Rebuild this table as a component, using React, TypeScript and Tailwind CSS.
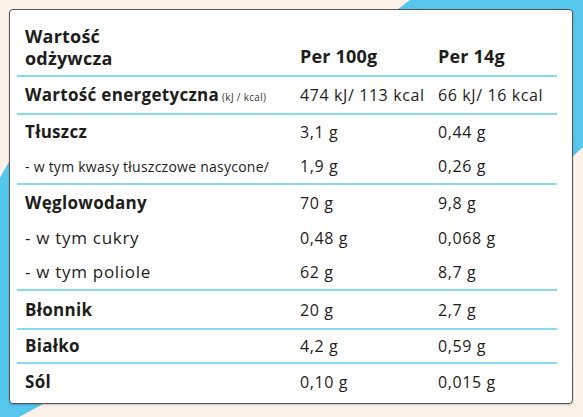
const font = { fontFamily: "'Open Sans', 'Noto Sans', sans-serif" };

type Row = { label: string; sub?: string; bold?: boolean; small?: boolean; a: string; b: string; h: string };

const groups: Row[][] = [
  [{ label: "Wartość energetyczna", sub: "(kJ / kcal)", bold: true, a: "474 kJ/ 113 kcal", b: "66 kJ/ 16 kcal", h: "h-[36px]" }],
  [
    { label: "Tłuszcz", bold: true, a: "3,1 g", b: "0,44 g", h: "h-[34px]" },
    { label: "- w tym kwasy tłuszczowe nasycone/", small: true, a: "1,9 g", b: "0,26 g", h: "h-[34px]" },
  ],
  [
    { label: "Węglowodany", bold: true, a: "70 g", b: "9,8 g", h: "h-[35px]" },
    { label: "- w tym cukry", a: "0,48 g", b: "0,068 g", h: "h-[35px]" },
    { label: "- w tym poliole", a: "62 g", b: "8,7 g", h: "h-[34px]" },
  ],
  [{ label: "Błonnik", bold: true, a: "20 g", b: "2,7 g", h: "h-[37px]" }],
  [{ label: "Białko", bold: true, a: "4,2 g", b: "0,59 g", h: "h-[32px]" }],
];

function labelClass(r: Row) {
  if (r.bold) return "text-[17px] font-bold tracking-[0.3px]";
  if (r.small) return "text-[14px] tracking-[0.25px]";
  return "text-[17px] tracking-[0.7px]";
}

function TableRow({ row }: { row: Row }) {
  return (
    <div className={`grid grid-cols-[283px_138px_1fr] items-center ${row.h}`}>
      <div className={`pl-[8px] whitespace-nowrap ${labelClass(row)}`}>
        {row.label}
        {row.sub && <span className="ml-[3px] text-[10px] font-normal tracking-[0.3px] text-[#333]">{row.sub}</span>}
      </div>
      <div className="text-[16px] tracking-[0.6px] whitespace-nowrap">{row.a}</div>
      <div className="text-[16px] tracking-[0.6px] whitespace-nowrap">{row.b}</div>
    </div>
  );
}

export default function App() {
  return (
    <div className="relative w-[583px] h-[417px] overflow-hidden bg-[#fdf2e8]" style={font}>
      <svg className="absolute inset-0" width="583" height="417" viewBox="0 0 583 417">
        <polygon points="410,0 583,0 583,147 568,161 330,60" fill="#55c6ee" />
        <path d="M0,178 C4,170 9,161 16,152 L120,250 L60,395 L19,417 L0,417 Z" fill="#55c6ee" />
      </svg>
      <div className="relative ml-[9px] mt-[9px] w-[564px] h-[395px] rounded-[4px] border border-[#555] bg-white text-[#1d1d1b] shadow-[0_1px_2px_rgba(0,0,0,0.2)]">
        <div className="ml-[7px] w-[540px]">
          <div className="grid grid-cols-[283px_138px_1fr] h-[67px] pt-[15px] border-b-2 border-[#86dde9] leading-[22px] text-[18px] font-bold tracking-[0.2px]">
            <div className="pl-[8px]">
              Wartość
              <br />
              odżywcza
            </div>
            <div className="self-end pb-[8px]">Per 100g</div>
            <div className="self-end pb-[8px]">Per 14g</div>
          </div>
          {groups.map((g, i) => (
            <div key={i} className="border-b-2 border-[#86dde9]">
              {g.map((r) => (
                <TableRow key={r.label} row={r} />
              ))}
            </div>
          ))}
          <TableRow row={{ label: "Sól", bold: true, a: "0,10 g", b: "0,015 g", h: "h-[36px]" }} />
        </div>
      </div>
    </div>
  );
}
